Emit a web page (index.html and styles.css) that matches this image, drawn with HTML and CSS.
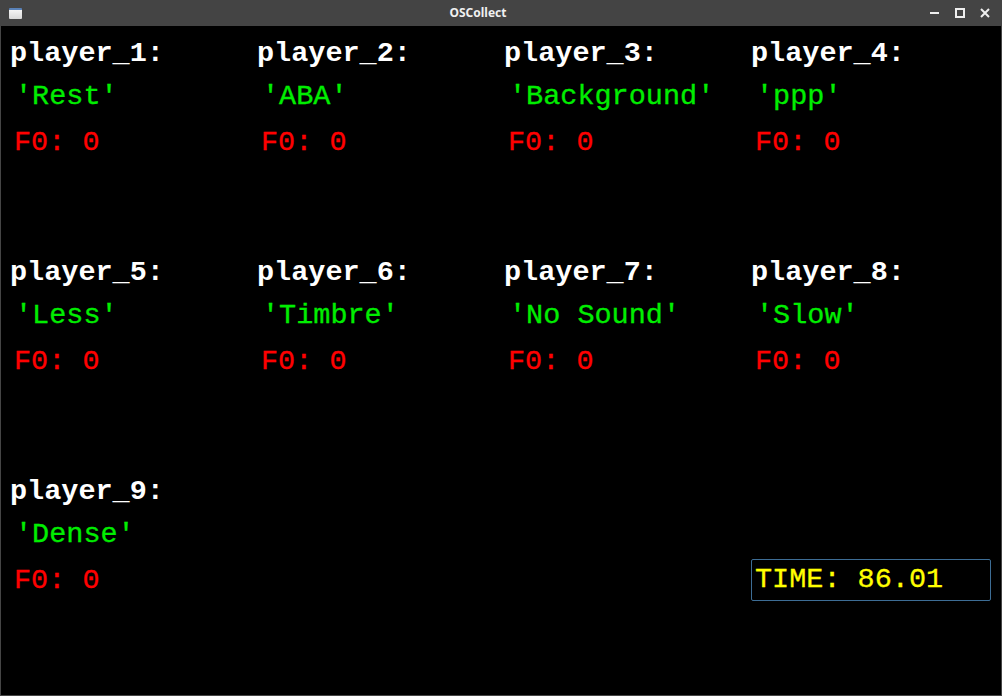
FILE: index.html
```html
<!DOCTYPE html>
<html>
<head>
<meta charset="utf-8">
<link rel="stylesheet" href="styles.css">
</head>
<body>
<div class="window">
  <div class="titlebar">
    <div class="app-icon"></div>
    <div class="title">OSCollect</div>
    <div class="controls">
      <svg width="12" height="12" viewBox="0 0 12 12"><rect x="1" y="5" width="9" height="2" fill="#eee"/></svg>
      <svg width="12" height="12" viewBox="0 0 12 12"><rect x="2" y="2" width="8" height="8" fill="none" stroke="#eee" stroke-width="2"/></svg>
      <svg width="12" height="12" viewBox="0 0 12 12"><path d="M2 2 L10 10 M10 2 L2 10" stroke="#eee" stroke-width="2"/></svg>
    </div>
  </div>
  <div class="content">
    <div class="grid">
      <div class="cell"><div class="name">player_1:</div><div class="label">'Rest'</div><div class="f0">F0: 0</div></div>
      <div class="cell"><div class="name">player_2:</div><div class="label">'ABA'</div><div class="f0">F0: 0</div></div>
      <div class="cell"><div class="name">player_3:</div><div class="label">'Background'</div><div class="f0">F0: 0</div></div>
      <div class="cell"><div class="name">player_4:</div><div class="label">'ppp'</div><div class="f0">F0: 0</div></div>
      <div class="cell"><div class="name">player_5:</div><div class="label">'Less'</div><div class="f0">F0: 0</div></div>
      <div class="cell"><div class="name">player_6:</div><div class="label">'Timbre'</div><div class="f0">F0: 0</div></div>
      <div class="cell"><div class="name">player_7:</div><div class="label">'No Sound'</div><div class="f0">F0: 0</div></div>
      <div class="cell"><div class="name">player_8:</div><div class="label">'Slow'</div><div class="f0">F0: 0</div></div>
      <div class="cell"><div class="name">player_9:</div><div class="label">'Dense'</div><div class="f0">F0: 0</div></div>
      <div class="cell"></div>
      <div class="cell"></div>
      <div class="cell time-cell"><div class="time">TIME: 86.01</div></div>
    </div>
  </div>
</div>
</body>
</html>
```

FILE: styles.css
```css
html, body {
  margin: 0;
  padding: 0;
  background: #000;
}
.window {
  width: 1002px;
  height: 696px;
  box-sizing: border-box;
  border: 1px solid #454545;
  border-top: none;
  background: #000;
  display: flex;
  flex-direction: column;
}
.titlebar {
  height: 26px;
  margin: 0 -1px;
  background: #444444;
  display: flex;
  align-items: center;
  position: relative;
  flex-shrink: 0;
}
.app-icon {
  width: 13px;
  height: 11px;
  margin-left: 9px;
  box-sizing: border-box;
  border-top: 2px solid #5a82b8;
  background: linear-gradient(#f4f4f4, #d8d8d8);
  border-radius: 1px;
}
.title {
  position: absolute;
  left: 0;
  right: 46px;
  text-align: center;
  color: #f0f0f0;
  font-family: "Noto Sans", "DejaVu Sans", sans-serif;
  font-weight: bold;
  font-size: 12px;
  line-height: 26px;
  pointer-events: none;
}
.controls {
  margin-left: auto;
  margin-right: 11px;
  display: flex;
  gap: 13px;
  align-items: center;
}
.controls svg { display: block; }
.content {
  flex: 1;
  padding: 6px 0 0 9px;
}
.grid {
  display: grid;
  grid-template-columns: repeat(4, 247px);
  grid-auto-rows: 219px;
}
.cell {
  font-family: "Courier New", "Liberation Mono", monospace;
  font-size: 28.5px;
}
.name {
  color: #ffffff;
  font-weight: bold;
  line-height: 44px;
}
.label {
  color: #00ee00;
  line-height: 42px;
  padding-left: 5px;
  -webkit-text-stroke: 0.3px #00ee00;
}
.f0 {
  color: #ff0000;
  line-height: 50px;
  padding-left: 4px;
  -webkit-text-stroke: 0.3px #ff0000;
}
.time-cell {
  padding-top: 89px;
}
.time {
  width: 240px;
  height: 42px;
  box-sizing: border-box;
  border: 1px solid #3d6d95;
  border-radius: 2px;
  color: #ffff00;
  line-height: 40px;
  padding-left: 3px;
  -webkit-text-stroke: 0.3px #ffff00;
}
```
